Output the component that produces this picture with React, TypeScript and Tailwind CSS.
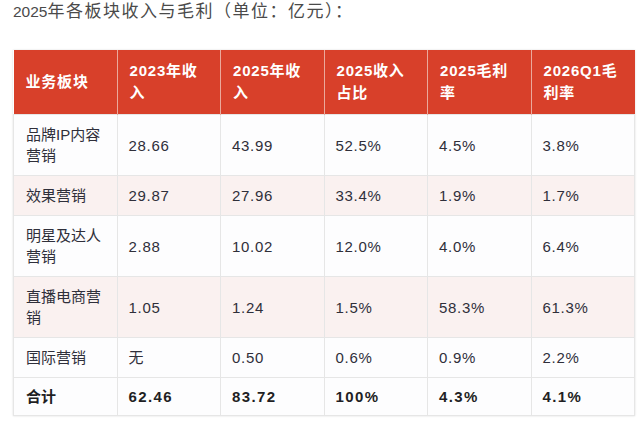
const rows = [
  { name: "品牌IP内容营销", v: ["28.66", "43.99", "52.5%", "4.5%", "3.8%"] },
  { name: "效果营销", v: ["29.87", "27.96", "33.4%", "1.9%", "1.7%"] },
  { name: "明星及达人营销", v: ["2.88", "10.02", "12.0%", "4.0%", "6.4%"] },
  { name: "直播电商营销", v: ["1.05", "1.24", "1.5%", "58.3%", "61.3%"] },
  { name: "国际营销", v: ["无", "0.50", "0.6%", "0.9%", "2.2%"] },
];

const total = ["62.46", "83.72", "100%", "4.3%", "4.1%"];

const headers = ["业务板块", "2023年收入", "2025年收入", "2025收入占比", "2025毛利率", "2026Q1毛利率"];

export default function App() {
  return (
    <div
      className="min-h-screen w-[640px] h-[427px] overflow-hidden bg-white"
      style={{ fontFamily: '"Liberation Sans", "Noto Sans CJK SC", sans-serif' }}
    >
      {/* Title */}
      <p className="pl-[13px] text-[17px] leading-[24px] tracking-[1.5px] text-[#4a4a4a]">
        <span className="text-[15.5px] tracking-normal">2025</span>年各板块收入与毛利（单位：亿元）：
      </p>

      {/* Table */}
      <div className="mt-[26px] ml-[13px] w-[622px] shadow-[0_0_2px_rgba(0,0,0,0.14)]">
        <table className="w-full table-fixed border-collapse text-left">
          <thead>
            <tr className="bg-[#d8402a]">
              {headers.map((h) => (
                <th
                  key={h}
                  className="border-x border-[#eba99c] first:border-l-0 last:border-r-0 px-[12px] py-[10px] align-middle text-[15px] leading-[22px] tracking-[0.8px] font-bold text-white"
                >
                  {h}
                </th>
              ))}
            </tr>
          </thead>
          <tbody>
            {rows.map((r, i) => (
              <tr key={r.name} className={i % 2 === 1 ? "bg-[#faf1f0]" : "bg-[#fdfdfe]"}>
                <td className="border border-[#e6e6e6] px-[12px] py-[9px] align-middle text-[15px] leading-[21px] text-[#2f2f3a]">
                  {r.name}
                </td>
                {r.v.map((x, j) => (
                  <td
                    key={j}
                    className="border border-[#e6e6e6] px-[11px] py-[9px] align-middle text-[15px] leading-[21px] tracking-[0.7px] text-[#2f2f3a]"
                  >
                    {x}
                  </td>
                ))}
              </tr>
            ))}
            <tr className="bg-[#fdfdfe]">
              <td className="border border-[#e6e6e6] px-[12px] py-[8px] align-middle text-[15px] leading-[21px] font-bold text-[#1f1f24]">
                合计
              </td>
              {total.map((x, j) => (
                <td
                  key={j}
                  className="border border-[#e6e6e6] px-[11px] py-[8px] align-middle text-[15px] leading-[21px] tracking-[1.4px] font-bold text-[#1f1f24]"
                >
                  {x}
                </td>
              ))}
            </tr>
          </tbody>
        </table>
      </div>
    </div>
  );
}
